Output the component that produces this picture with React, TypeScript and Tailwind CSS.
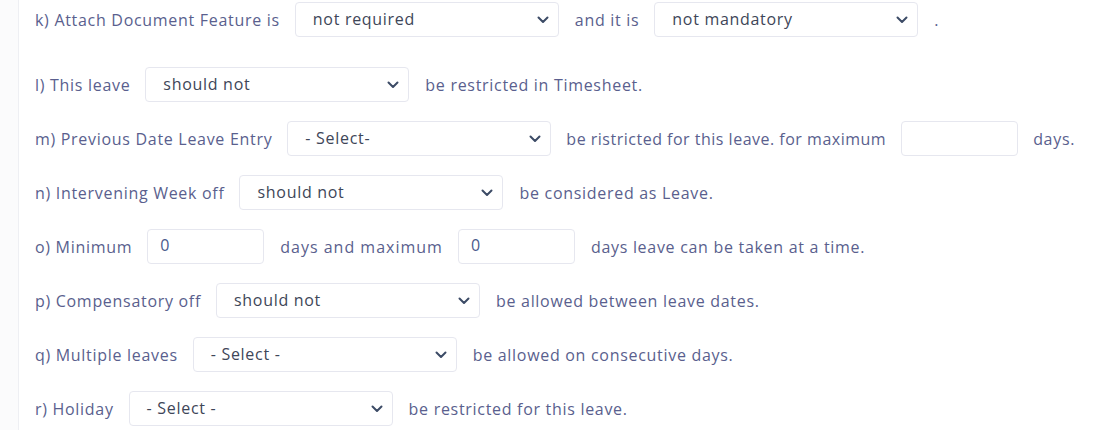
import * as React from "react"

function Chevron() {
  return (
    <svg width="12" height="8" viewBox="0 0 12 8" fill="none" className="shrink-0">
      <path d="M1.5 1.5 L6 6 L10.5 1.5" stroke="#3c4b66" strokeWidth="2" strokeLinecap="round" strokeLinejoin="round" />
    </svg>
  )
}

function FakeSelect({ value }: { value: string }) {
  return (
    <div className="flex h-[35px] w-[264px] shrink-0 items-center justify-between rounded-[4px] border border-[#e6e7ef] bg-white pl-[17px] pr-[9px] text-[#3e4658]">
      <span className="-mt-[2px]">{value}</span>
      <Chevron />
    </div>
  )
}

function NumberBox({ value }: { value?: string }) {
  return (
    <div className="flex h-[35px] w-[117px] shrink-0 items-center rounded-[4px] border border-[#e6e7ef] bg-white pl-[12px] text-[#4a5a8c]">
      <span className="-mt-[3px]">{value}</span>
    </div>
  )
}

function Row({ children, className = "" }: { children: React.ReactNode; className?: string }) {
  return <div className={"flex items-center gap-[15px] " + className}>{children}</div>
}

export default function App() {
  return (
    <div className="min-h-[430px] w-[1099px] overflow-hidden bg-[#fbfbfc] pl-[18px] font-['Open_Sans',sans-serif] text-[16px] tracking-[0.7px] text-[#5a5f8e]">
      <div className="min-h-[430px] border-l border-[#eeeff3] bg-white pl-[16px] pt-[2px]">
        <div className="flex flex-col gap-[19px]">
          <Row className="mb-[11px]">
            <span>k) Attach Document Feature is</span>
            <FakeSelect value="not required" />
            <span className="pl-[1px]">and it is</span>
            <FakeSelect value="not mandatory" />
            <span className="pl-[1px]">.</span>
          </Row>
          <Row>
            <span>l) This leave</span>
            <FakeSelect value="should not" />
            <span className="pl-[1px]">be restricted in Timesheet.</span>
          </Row>
          <Row>
            <span>m) Previous Date Leave Entry</span>
            <FakeSelect value="- Select-" />
            <span className="tracking-[0.5px]">be ristricted for this leave. for maximum</span>
            <NumberBox />
            <span>days.</span>
          </Row>
          <Row>
            <span>n) Intervening Week off</span>
            <FakeSelect value="should not" />
            <span className="pl-[1px]">be considered as Leave.</span>
          </Row>
          <Row>
            <span>o) Minimum</span>
            <NumberBox value="0" />
            <span className="pl-[1px] tracking-[1px]">days and maximum</span>
            <NumberBox value="0" />
            <span className="pl-[1px]">days leave can be taken at a time.</span>
          </Row>
          <Row>
            <span>p) Compensatory off</span>
            <FakeSelect value="should not" />
            <span className="pl-[1px]">be allowed between leave dates.</span>
          </Row>
          <Row>
            <span>q) Multiple leaves</span>
            <FakeSelect value="- Select -" />
            <span className="pl-[1px]">be allowed on consecutive days.</span>
          </Row>
          <Row>
            <span>r) Holiday</span>
            <FakeSelect value="- Select -" />
            <span className="pl-[1px]">be restricted for this leave.</span>
          </Row>
        </div>
      </div>
    </div>
  )
}
